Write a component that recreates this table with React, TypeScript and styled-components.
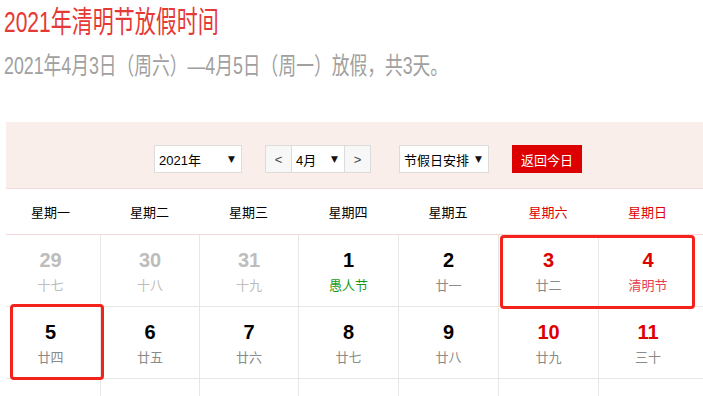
import React from "react";
import styled, { createGlobalStyle } from "styled-components";

const Global = createGlobalStyle`
  html, body { margin: 0; padding: 0; background: #fff; overflow: hidden; }
  body { font-family: "Liberation Sans", "Noto Sans CJK SC", sans-serif; }
`;

const Page = styled.div`
  width: 703px;
  padding: 0 0 0 6px;
  box-sizing: border-box;
`;

const Title = styled.h1`
  margin: 0 0 0 -2px;
  padding-top: 4px;
  font-size: 30px;
  line-height: 36px;
  font-weight: normal;
  color: #e53935;
  white-space: nowrap;
  transform: scaleX(0.7);
  transform-origin: left center;
`;

const Subtitle = styled.p`
  margin: 11px 0 0 -2px;
  font-size: 24px;
  line-height: 30px;
  color: #a0a0a0;
  white-space: nowrap;
  transform: scaleX(0.74);
  transform-origin: left center;
`;

const Calendar = styled.div`
  margin-top: 41px;
  width: 697px;
`;

const Toolbar = styled.div`
  height: 67px;
  background: #faeeea;
  border-bottom: 1px solid #f2dcdc;
  display: flex;
  align-items: flex-start;
  padding: 23px 0 0 148px;
  box-sizing: border-box;
  font-size: 13px;
  color: #000;
`;

const SelectBox = styled.div<{ $w: number }>`
  width: ${(p) => p.$w}px;
  height: 28px;
  box-sizing: border-box;
  background: #fff;
  border: 1px solid #dcdcdc;
  display: flex;
  align-items: center;
  justify-content: space-between;
  padding: 0 6px 0 4px;
`;

const Arrow = styled.span`
  font-family: "DejaVu Sans", sans-serif;
  font-size: 9px;
  color: #111;
`;

const Group = styled.div`
  display: flex;
  margin-left: 23px;
`;

const StepBtn = styled.div`
  width: 27px;
  height: 28px;
  box-sizing: border-box;
  background: #f7f7f7;
  border: 1px solid #dcdcdc;
  display: flex;
  align-items: center;
  justify-content: center;
  color: #444;
  font-size: 13px;
`;

const MonthBox = styled(SelectBox)`
  border-left: none;
  border-right: none;
`;

const Spacer = styled.div<{ $w: number }>`
  width: ${(p) => p.$w}px;
`;

const TodayBtn = styled.div`
  margin-left: 23px;
  width: 70px;
  height: 28px;
  background: #dd0000;
  color: #fff;
  display: flex;
  align-items: center;
  justify-content: center;
  font-size: 13px;
`;

const COLS = "94px 99px 99px 100px 100px 100px 105px";

const WeekHeader = styled.div`
  display: grid;
  grid-template-columns: ${COLS};
  height: 46px;
  border-bottom: 1px solid #f5d9d9;
  box-sizing: border-box;
`;

const WeekName = styled.div<{ $col: number; $red: boolean }>`
  display: flex;
  align-items: center;
  justify-content: center;
  font-size: 13px;
  color: ${(p) => (p.$red ? "#e00000" : "#000")};
  padding-right: ${(p) => (p.$col === 0 ? 5 : p.$col === 6 ? 6 : 0)}px;
`;

const Body = styled.div`
  position: relative;
`;

const Row = styled.div`
  display: grid;
  grid-template-columns: ${COLS};
  height: 72px;
  border-bottom: 1px solid #e6e6e6;
  box-sizing: border-box;
`;

const Cell = styled.div<{ $col: number }>`
  display: flex;
  flex-direction: column;
  align-items: center;
  padding-top: 13px;
  border-left: ${(p) => (p.$col === 0 ? "none" : "1px solid #e6e6e6")};
  padding-right: ${(p) => (p.$col === 0 ? 5 : p.$col === 6 ? 6 : 0)}px;
`;

const DayNum = styled.div<{ $tone: "normal" | "red" | "muted" }>`
  font-size: 20px;
  line-height: 24px;
  font-weight: bold;
  color: ${(p) => (p.$tone === "red" ? "#dd0000" : p.$tone === "muted" ? "#bdbdbd" : "#000")};
`;

const Lunar = styled.div<{ $tone: "normal" | "muted" | "fest" | "holiday" }>`
  margin-top: 5px;
  font-size: 13px;
  line-height: 18px;
  color: ${(p) =>
    p.$tone === "muted"
      ? "#bdbdbd"
      : p.$tone === "fest"
      ? "#1a9a1a"
      : p.$tone === "holiday"
      ? "#e2404e"
      : "#8a8a8a"};
`;

const Highlight = styled.div<{ $l: number; $t: number; $w: number; $h: number }>`
  position: absolute;
  left: ${(p) => p.$l}px;
  top: ${(p) => p.$t}px;
  width: ${(p) => p.$w}px;
  height: ${(p) => p.$h}px;
  box-sizing: border-box;
  border: 3px solid #f3221a;
  border-radius: 4px;
  pointer-events: none;
`;

type Day = {
  n: number;
  lunar: string;
  muted?: boolean;
  fest?: boolean;
  holiday?: boolean;
};

const weeks: Day[][] = [
  [
    { n: 29, lunar: "十七", muted: true },
    { n: 30, lunar: "十八", muted: true },
    { n: 31, lunar: "十九", muted: true },
    { n: 1, lunar: "愚人节", fest: true },
    { n: 2, lunar: "廿一" },
    { n: 3, lunar: "廿二" },
    { n: 4, lunar: "清明节", holiday: true },
  ],
  [
    { n: 5, lunar: "廿四" },
    { n: 6, lunar: "廿五" },
    { n: 7, lunar: "廿六" },
    { n: 8, lunar: "廿七" },
    { n: 9, lunar: "廿八" },
    { n: 10, lunar: "廿九" },
    { n: 11, lunar: "三十" },
  ],
];

const weekNames = ["星期一", "星期二", "星期三", "星期四", "星期五", "星期六", "星期日"];

export default function App() {
  return (
    <Page>
      <Global />
      <Title>2021年清明节放假时间</Title>
      <Subtitle>2021年4月3日（周六）—4月5日（周一）放假，共3天。</Subtitle>
      <Calendar>
        <Toolbar>
          <SelectBox $w={88}>
            <span>2021年</span>
            <Arrow>▼</Arrow>
          </SelectBox>
          <Group>
            <StepBtn>&lt;</StepBtn>
            <MonthBox $w={52}>
              <span>4月</span>
              <Arrow>▼</Arrow>
            </MonthBox>
            <StepBtn>&gt;</StepBtn>
          </Group>
          <Spacer $w={28} />
          <SelectBox $w={90}>
            <span>节假日安排</span>
            <Arrow>▼</Arrow>
          </SelectBox>
          <TodayBtn>返回今日</TodayBtn>
        </Toolbar>
        <WeekHeader>
          {weekNames.map((w, i) => (
            <WeekName key={w} $col={i} $red={i >= 5}>
              {w}
            </WeekName>
          ))}
        </WeekHeader>
        <Body>
          {weeks.map((week, wi) => (
            <Row key={wi}>
              {week.map((d, i) => (
                <Cell key={i} $col={i}>
                  <DayNum $tone={d.muted ? "muted" : i >= 5 ? "red" : "normal"}>{d.n}</DayNum>
                  <Lunar
                    $tone={d.muted ? "muted" : d.fest ? "fest" : d.holiday ? "holiday" : "normal"}
                  >
                    {d.lunar}
                  </Lunar>
                </Cell>
              ))}
            </Row>
          ))}
          <Row>
            {weekNames.map((w, i) => (
              <Cell key={w} $col={i} />
            ))}
          </Row>
          <Highlight $l={494} $t={0} $w={195} $h={74} />
          <Highlight $l={4} $t={69} $w={94} $h={76} />
        </Body>
      </Calendar>
    </Page>
  );
}
